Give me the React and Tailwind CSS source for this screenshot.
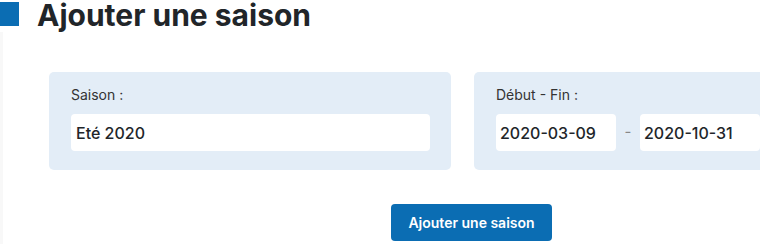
import React from "react";

const Field = ({ children, className = "" }) => (
  <div
    className={`flex h-[37px] items-center rounded-[4px] bg-white text-[16px] font-medium leading-[20px] text-[#212529] ${className}`}
  >
    {children}
  </div>
);

export default function App() {
  return (
    <div
      className="h-[244px] w-[760px] overflow-hidden bg-white"
      style={{ fontFamily: "Inter, 'Noto Sans', sans-serif" }}
    >
      {/* header */}
      <div className="flex h-[30px] items-start">
        <div className="mt-[2px] h-[24px] w-[19px] shrink-0 bg-[#0b6db3]" />
        <h1 className="ml-[18px] whitespace-nowrap text-[30px] font-bold leading-[30px] text-[#212529]">
          Ajouter une saison
        </h1>
      </div>

      <div className="mt-[2px] h-[212px] border-l-[3px] border-[#f8f8f8]">
        <div className="flex gap-[23px] pl-[46px] pt-[40px]">
          <div className="w-[402px] shrink-0 rounded-[5px] bg-[#e3edf7] px-[22px] pb-[19px] pt-[15px]">
            <div className="text-[14px] leading-[16px] text-[#333]">Saison :</div>
            <Field className="mt-[11px] w-[359px] pl-[5px]">Eté 2020</Field>
          </div>

          <div className="w-[402px] shrink-0 rounded-[5px] bg-[#e3edf7] px-[22px] pb-[19px] pt-[15px]">
            <div className="text-[14px] leading-[16px] text-[#333]">Début - Fin :</div>
            <div className="mt-[11px] flex items-center">
              <Field className="w-[120px] pl-[4px]">2020-03-09</Field>
              <span className="w-[24px] text-center text-[15px] text-[#888]">-</span>
              <Field className="w-[120px] pl-[4px]">2020-10-31</Field>
            </div>
          </div>
        </div>

        <button className="ml-[388px] mt-[34px] flex h-[37px] w-[161px] items-center justify-center rounded-[4px] bg-[#0b6db3] text-[14px] font-semibold text-white">
          Ajouter une saison
        </button>
      </div>
    </div>
  );
}
